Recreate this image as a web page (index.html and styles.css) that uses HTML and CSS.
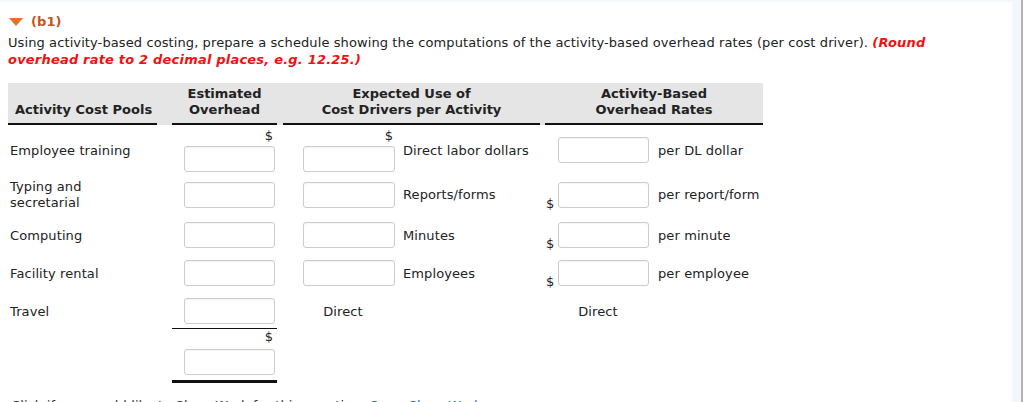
FILE: index.html
```html
<!DOCTYPE html>
<html lang="en">
<head>
<meta charset="utf-8">
<title>Activity-based overhead rates</title>
<link rel="stylesheet" href="styles.css">
</head>
<body>
<div class="page">
  <main class="content">
    <h2 class="part-title">
      <svg class="caret" width="14" height="8" viewBox="0 0 14 8" aria-hidden="true"><polygon points="0,0 14,0 7,8" fill="#f26b21"/></svg>
      <span>(b1)</span>
    </h2>
    <p class="prompt">Using activity-based costing, prepare a schedule showing the computations of the activity-based overhead rates (per cost driver). <em class="hint">(Round overhead rate to 2 decimal places, e.g. 12.25.)</em></p>

    <div class="schedule">
      <div class="row head">
        <div class="th th-pool">Activity Cost Pools</div>
        <div class="th th-b">Estimated<br>Overhead</div>
        <div class="th th-cd">Expected Use of<br>Cost Drivers per Activity</div>
        <div class="th th-ef">Activity-Based<br>Overhead Rates</div>
      </div>

      <div class="row r1">
        <div class="pool">Employee training</div>
        <div class="amt"><span class="cur-top">$</span><input class="box" type="text"></div>
        <div class="drv"><span class="cur-top">$</span><input class="box" type="text"></div>
        <div class="drv-label">Direct labor dollars</div>
        <div class="rate"><span class="cur"></span><input class="box" type="text"></div>
        <div class="rate-label">per DL dollar</div>
      </div>

      <div class="row r2">
        <div class="pool">Typing and<br>secretarial</div>
        <div class="amt"><input class="box" type="text"></div>
        <div class="drv"><input class="box" type="text"></div>
        <div class="drv-label">Reports/forms</div>
        <div class="rate"><span class="cur">$</span><input class="box" type="text"></div>
        <div class="rate-label">per report/form</div>
      </div>

      <div class="row">
        <div class="pool">Computing</div>
        <div class="amt"><input class="box" type="text"></div>
        <div class="drv"><input class="box" type="text"></div>
        <div class="drv-label">Minutes</div>
        <div class="rate"><span class="cur">$</span><input class="box" type="text"></div>
        <div class="rate-label">per minute</div>
      </div>

      <div class="row">
        <div class="pool">Facility rental</div>
        <div class="amt"><input class="box" type="text"></div>
        <div class="drv"><input class="box" type="text"></div>
        <div class="drv-label">Employees</div>
        <div class="rate"><span class="cur">$</span><input class="box" type="text"></div>
        <div class="rate-label">per employee</div>
      </div>

      <div class="row r5">
        <div class="pool">Travel</div>
        <div class="amt"><input class="box" type="text"></div>
        <div class="drv drv-text">Direct</div>
        <div class="drv-label"></div>
        <div class="rate rate-text">Direct</div>
        <div class="rate-label"></div>
      </div>

      <div class="row total">
        <div class="pool"></div>
        <div class="amt amt-total"><span class="cur-top">$</span><input class="box" type="text"></div>
      </div>
    </div>

    <p class="showwork">Click if you would like to Show Work for this question: <a class="link" href="#">Open Show Work</a></p>
  </main>
  <div class="rail"></div>
  <div class="edge"></div>
</div>
</body>
</html>
```

FILE: styles.css
```css
* { box-sizing: border-box; }

html, body {
  margin: 0;
  padding: 0;
  background: #ffffff;
}

body {
  font-family: "DejaVu Sans", Verdana, sans-serif;
  font-size: 13px;
  line-height: 17px;
  letter-spacing: 0.1px;
  color: #222222;
  overflow: hidden;
}

.page {
  display: flex;
  min-height: 100vh;
  padding-right: 1px;
}

.content {
  flex: 1;
  border-top: 2px solid #f4f7fa;
  padding: 11px 8px 0 8px;
}

.rail {
  width: 9px;
  background: #f3f7fb;
}

.edge {
  width: 2px;
  background: #b3b3b3;
}

.part-title {
  display: flex;
  align-items: center;
  gap: 8px;
  margin: 0;
  font-size: 13px;
  line-height: 17px;
  font-weight: bold;
  color: #c5541d;
}

.caret {
  display: block;
  margin-left: 1px;
  margin-top: 1px;
}

.prompt {
  margin: 4px 0 0 0;
  max-width: 945px;
}

.hint {
  color: #f21010;
  font-weight: bold;
  font-style: italic;
  letter-spacing: 0.2px;
}

.schedule {
  margin-top: 15px;
  width: 755px;
}

.row {
  display: grid;
  grid-template-columns: 164px 111px 114px 148px 105px 113px;
  align-items: center;
  padding: 6px 0;
}

.row.head {
  background: #e5e5e5;
  align-items: end;
  padding: 0;
  line-height: 16px;
  letter-spacing: 0;
}

.th {
  font-weight: bold;
  padding: 3px 0 5px 0;
  border-bottom: 2px solid #111111;
  text-align: center;
}

.th-pool {
  text-align: left;
  padding-left: 7px;
  margin-right: 15px;
}

.th-b {
  margin-right: 6px;
}

.th-cd {
  grid-column: span 2;
  margin-right: 5px;
}

.th-ef {
  grid-column: span 2;
}

.r1 { padding: 3px 0; }
.r2 { padding: 4px 0 5px 0; line-height: 16px; }
.r5 { padding: 6px 0 4px 0; }

.pool {
  padding-left: 2px;
}

.amt {
  display: flex;
  flex-direction: column;
  align-items: flex-end;
  margin-right: 6px;
  padding-right: 2px;
}

.drv {
  display: flex;
  flex-direction: column;
  align-items: flex-end;
  padding-right: 2px;
}

.cur-top {
  display: block;
  line-height: 16px;
  height: 16px;
  margin-bottom: 2px;
  padding-right: 2px;
}

.drv-text {
  align-items: center;
  padding-left: 8px;
}

.drv-label {
  padding-left: 6px;
}

.rate {
  display: flex;
  align-items: flex-end;
  padding-left: 1px;
}

.cur {
  width: 12px;
  line-height: 13px;
  margin-bottom: -2px;
}

.rate-text {
  justify-content: center;
}

.rate-label {
  padding-left: 8px;
}

.box {
  display: block;
  width: 91px;
  height: 26px;
  margin: 0;
  border: 1px solid #cccccc;
  border-radius: 3px;
  background: #ffffff;
  font: inherit;
  box-shadow: inset 0 1px 1px rgba(0, 0, 0, 0.04);
}

.drv .box {
  width: 92px;
}

.total {
  padding: 0;
}

.amt-total {
  border-top: 1px solid #111111;
  border-bottom: 3px solid #111111;
  padding-bottom: 5px;
}

.amt-total .cur-top {
  margin-bottom: 4px;
}

.showwork {
  margin: 14px 0 0 3px;
  color: #333333;
}

.link {
  color: #2a6ebb;
  text-decoration: none;
}
```
